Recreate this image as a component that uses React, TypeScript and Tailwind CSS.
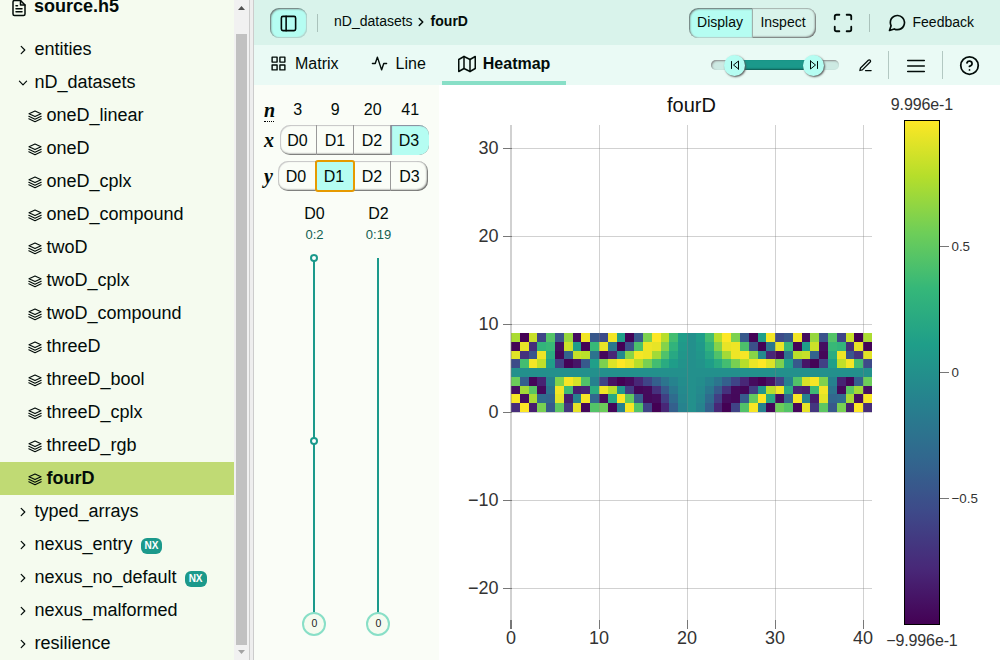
import {
  FiActivity,
  FiChevronDown,
  FiChevronRight,
  FiEdit3,
  FiFileText,
  FiGrid,
  FiHelpCircle,
  FiMap,
  FiMaximize,
  FiMenu,
  FiMessageCircle,
  FiSidebar,
  FiSkipBack,
  FiSkipForward,
} from 'react-icons/fi';
import clsx from 'clsx';

const VIRIDIS = [
  [68, 1, 84],
  [72, 40, 120],
  [62, 73, 137],
  [49, 104, 142],
  [38, 130, 142],
  [31, 158, 137],
  [53, 183, 121],
  [110, 206, 88],
  [181, 222, 43],
  [253, 231, 37],
];

const DOMAIN_MAX = 0.9996;
const COLS = 41;
const ROWS = 9;

function viridis(t: number) {
  const pos = Math.min(Math.max(t, 0), 1) * (VIRIDIS.length - 1);
  const i = Math.min(Math.floor(pos), VIRIDIS.length - 2);
  const rgb = VIRIDIS[i].map((c, k) => Math.round(c + (VIRIDIS[i + 1][k] - c) * (pos - i)));
  return `rgb(${rgb.join(',')})`;
}

interface Entity {
  name: string;
  kind: 'group' | 'dataset';
  expanded?: boolean;
  selected?: boolean;
  nexus?: boolean;
}

const ENTITIES: Entity[] = [
  { name: 'entities', kind: 'group' },
  { name: 'nD_datasets', kind: 'group', expanded: true },
  { name: 'oneD_linear', kind: 'dataset' },
  { name: 'oneD', kind: 'dataset' },
  { name: 'oneD_cplx', kind: 'dataset' },
  { name: 'oneD_compound', kind: 'dataset' },
  { name: 'twoD', kind: 'dataset' },
  { name: 'twoD_cplx', kind: 'dataset' },
  { name: 'twoD_compound', kind: 'dataset' },
  { name: 'threeD', kind: 'dataset' },
  { name: 'threeD_bool', kind: 'dataset' },
  { name: 'threeD_cplx', kind: 'dataset' },
  { name: 'threeD_rgb', kind: 'dataset' },
  { name: 'fourD', kind: 'dataset', selected: true },
  { name: 'typed_arrays', kind: 'group' },
  { name: 'nexus_entry', kind: 'group', nexus: true },
  { name: 'nexus_no_default', kind: 'group', nexus: true },
  { name: 'nexus_malformed', kind: 'group' },
  { name: 'resilience', kind: 'group' },
];

function LayersIcon({ className }: { className?: string }) {
  return (
    <svg
      className={className}
      viewBox="0 0 16 16"
      fill="none"
      stroke="currentColor"
      strokeWidth="1.1"
      strokeLinecap="round"
      strokeLinejoin="round"
    >
      <path d="M8 3 L14 5.8 L8 8.6 L2 5.8 Z" />
      <path d="M1.8 8.3 L8 11.2 L14.2 8.3" />
      <path d="M1.8 10.8 L8 13.7 L14.2 10.8" />
    </svg>
  );
}

function EntityItem({ entity }: { entity: Entity }) {
  const isGroup = entity.kind === 'group';
  const Icon = !isGroup ? LayersIcon : entity.expanded ? FiChevronDown : FiChevronRight;

  return (
    <li
      className={clsx(
        'flex h-[33px] items-center text-[18px] leading-[33px]',
        isGroup ? 'pl-[15px]' : 'pl-[27px]',
        entity.selected && 'bg-[#c0da74] font-bold',
      )}
    >
      <Icon className={clsx('mt-[1px] mr-[3.5px] h-4 w-4 shrink-0', isGroup && 'scale-90')} />
      <span>{entity.name}</span>
      {entity.nexus && (
        <span className="mt-[3px] ml-2 flex h-4 items-center rounded-md bg-[#1b998b] px-1 text-[10px] leading-none font-bold text-white">
          NX
        </span>
      )}
    </li>
  );
}

function Sidebar() {
  return (
    <aside className="flex w-[250px] shrink-0 border-r border-[#ccc]">
      <div className="flex-1 overflow-hidden bg-[#f5fbef]">
        <div className="flex h-[33px] items-start pl-[10px] text-[18px] font-bold">
          <FiFileText className="mt-[-1px] mr-[6px] h-[18px] w-[18px]" />
          <span className="-mt-[6px] leading-6">source.h5</span>
        </div>
        <ul>
          {ENTITIES.map((entity) => (
            <EntityItem key={entity.name} entity={entity} />
          ))}
        </ul>
      </div>
      <div className="flex w-[15px] flex-col items-center bg-[#f1f1f1]">
        <svg className="h-[34px] w-[15px] shrink-0" viewBox="0 0 15 34">
          <path d="M4 10 L7.5 6 L11 10 Z" fill="#505050" />
        </svg>
        <div className="w-[11px] flex-1 bg-[#c1c1c1]" />
        <svg className="h-[15px] w-[15px] shrink-0" viewBox="0 0 15 15">
          <path d="M4 5 L7.5 9 L11 5 Z" fill="#a3a3a3" />
        </svg>
      </div>
    </aside>
  );
}

function BreadcrumbsBar() {
  return (
    <header className="flex h-[45px] shrink-0 items-center bg-[#d9f3eb] text-[14px]">
      <button className="ml-4 flex h-[30px] w-[37px] items-center justify-center rounded-[9px] bg-[#b5fdf2] shadow-[inset_1px_1px_2px_#666,inset_-1px_-1px_1px_#b9d8d1]">
        <FiSidebar className="mt-0.5 h-[19px] w-[19px]" />
      </button>
      <div className="mx-[10px] h-[18px] w-px bg-[#aac2bb]" />
      <span className="ml-[6px] -mt-[3px]">nD_datasets</span>
      <FiChevronRight className="mr-[2.5px] ml-[1.5px] -mt-px h-[14px] w-[14px]" strokeWidth={2.6} />
      <span className="-mt-[3px] font-bold">fourD</span>
      <div className="ml-auto flex h-[30px] w-[127px] overflow-hidden rounded-[9px] shadow-[inset_-1px_-1px_2px_#666,inset_1px_1px_1px_#aab8b4]">
        <button className="w-[64px] rounded-l-[9px] border-r border-[#9fb0ab] bg-[#b5fdf2] shadow-[inset_1px_1px_2px_#666,inset_0_-1px_1px_#b9d8d1]">
          Display
        </button>
        <button className="flex-1 pr-[2px]">Inspect</button>
      </div>
      <FiMaximize className="ml-[16px] h-[22px] w-[22px]" />
      <div className="ml-[15px] h-[18px] w-px bg-[#aac2bb]" />
      <FiMessageCircle className="ml-[17px] h-[20px] w-[20px]" />
      <span className="mr-[26px] ml-[6px]">Feedback</span>
    </header>
  );
}

function DomainSlider() {
  return (
    <div className="flex h-[10px] w-[128px] items-center rounded-full bg-[#cdeae3] shadow-[inset_1px_1px_2px_#888]">
      <div className="z-10 ml-[13px] flex h-[21px] w-[21px] items-center justify-center rounded-full bg-[#b5fdf2] shadow-[1px_1px_2px_#555]">
        <FiSkipBack className="h-[12px] w-[12px]" />
      </div>
      <div className="-mx-1 h-[10px] flex-1 bg-[#1b998b] shadow-[inset_0_-1px_2px_#0e564e]" />
      <div className="z-10 mr-[15px] flex h-[21px] w-[21px] items-center justify-center rounded-full bg-[#b5fdf2] shadow-[1px_1px_2px_#555]">
        <FiSkipForward className="h-[12px] w-[12px]" />
      </div>
    </div>
  );
}

function Toolbar() {
  return (
    <nav className="flex h-10 shrink-0 items-center bg-[#eafaf5] text-[16px]">
      <div className="flex h-10 items-center pb-[3px] pl-[16px]">
        <FiGrid className="mr-[8px] h-[17px] w-[17px]" />
        Matrix
      </div>
      <div className="flex h-10 items-center pb-[3px] pl-[32px]">
        <FiActivity className="mr-[8px] h-[17px] w-[17px]" />
        Line
      </div>
      <div className="ml-[16px] flex h-10 w-[124px] items-center border-b-4 border-[#88dfc7] pt-[2px] pl-[16px] font-bold">
        <FiMap className="mr-[7px] h-[18px] w-[18px]" />
        Heatmap
      </div>
      <div className="ml-auto flex items-center">
        <DomainSlider />
        <FiEdit3 className="ml-[19px] h-[15px] w-[15px]" />
        <div className="ml-[15px] h-7 w-px bg-[#b3c8c2]" />
        <FiMenu className="mt-px ml-[15.5px] h-[22px] w-[22px]" strokeWidth={1.8} />
        <div className="ml-[15.5px] h-7 w-px bg-[#b3c8c2]" />
        <FiHelpCircle className="mr-[20px] ml-[16px] mt-px h-[21px] w-[21px]" />
      </div>
    </nav>
  );
}

const DIMS = ['D0', 'D1', 'D2', 'D3'];

function DimsRow({ axis, active }: { axis: 'x' | 'y'; active: number }) {
  return (
    <div className="flex h-9 items-center">
      <span
        className={clsx(
          "w-[10px] shrink-0 font-['Liberation_Serif',serif] text-[20px] leading-none font-bold italic",
          axis === 'x' ? 'mr-[6px]' : 'mr-[4px]',
        )}
      >
        {axis}
      </span>
      <div
        className={clsx(
          'flex h-[30px] shrink-0 rounded-[10px] shadow-[inset_-1px_-1px_2px_#555,inset_1px_1px_1px_#ccc]',
          axis === 'x' ? 'w-[149px]' : 'w-[150px]',
        )}
      >
        {DIMS.map((dim, i) => (
          <button
            key={dim}
            className={clsx(
              'h-[30px] shrink-0 border-[#999] pt-px',
              axis === 'y' && i < 2 ? 'w-[38px]' : 'w-[37px]',
              i === 0 && 'pr-[1px]',
              i < 3 && 'border-r',
              i === active && 'bg-[#b5fdf2]',
              i === active && axis === 'x' && 'w-[38px] rounded-r-[10px] pr-[2px] shadow-[inset_1px_1px_1px_#889]',
              i === active &&
                axis === 'y' &&
                'z-10 rounded-[2px] border-r-0 pr-[2px] outline-2 -outline-offset-1 outline-[#e69a00]',
            )}
          >
            {dim}
          </button>
        ))}
      </div>
    </div>
  );
}

function DimSlider({ dim, range, marks }: { dim: string; range: string; marks?: boolean }) {
  return (
    <div className="flex w-16 flex-col items-center">
      <span className="pl-px leading-6">{dim}</span>
      <span className="mt-[-1px] pl-px text-[13px] leading-5 text-[#135e50]">{range}</span>
      <svg className="mt-[6px]" width="26" height="385" viewBox="0 0 26 385">
        <path d="M13 7V362" stroke="#1b998b" strokeWidth="2" />
        {marks && (
          <g fill="#fff" stroke="#1b998b" strokeWidth="2">
            <circle cx="13" cy="7" r="3" />
            <circle cx="13" cy="190" r="3" />
          </g>
        )}
        <circle cx="13" cy="373" r="11" fill="#f5fbef" stroke="#88dfc7" strokeWidth="2" />
        <text x="13.3" y="376" textAnchor="middle" fontSize="10.5" fill="#222">
          0
        </text>
      </svg>
    </div>
  );
}

function DimensionMapper() {
  return (
    <div className="w-[185px] shrink-0 bg-[#fafdf7] pl-[10px] text-[16px]">
      <div className="flex h-[37px] items-end">
        <span className="w-[10px] border-b border-dotted border-black font-['Liberation_Serif',serif] text-[20px] leading-[21px] font-bold italic">
          n
        </span>
        <div className="ml-[5px] flex w-[150px] text-center">
          {[3, 9, 20, 41].map((n) => (
            <span key={n} className="flex-1">
              {n}
            </span>
          ))}
        </div>
      </div>
      <DimsRow axis="x" active={3} />
      <DimsRow axis="y" active={1} />
      <div className="mt-[8px] ml-[18px] flex">
        <DimSlider dim="D0" range="0:2" marks />
        <DimSlider dim="D2" range="0:19" />
      </div>
    </div>
  );
}

function Heatmap() {
  const cellW = 361 / COLS;
  const cellH = 79 / ROWS;
  const cells = [];
  for (let row = 0; row < ROWS; row++) {
    for (let col = 0; col < COLS; col++) {
      const value = Math.sin(0.025 * (row - 4) * (col - 20) ** 2);
      const left = Math.round(col * cellW);
      const top = Math.round((ROWS - 1 - row) * cellH);
      cells.push(
        <rect
          key={`${row}-${col}`}
          x={72 + left}
          y={248 + top}
          width={Math.round((col + 1) * cellW) - left}
          height={Math.round((ROWS - row) * cellH) - top}
          fill={viridis((value / DOMAIN_MAX + 1) / 2)}
        />,
      );
    }
  }

  return (
    <svg width="561" height="575" viewBox="0 0 561 575" className="bg-white" fill="#333">
      <defs>
        <linearGradient id="viridis" x1="0" y1="1" x2="0" y2="0">
          {VIRIDIS.map((_, i) => (
            <stop key={i} offset={i / 9} stopColor={viridis(i / 9)} />
          ))}
        </linearGradient>
      </defs>

      <text x="252.5" y="27" textAnchor="middle" fontSize="20" fill="#111">
        fourD
      </text>
      <g shapeRendering="crispEdges">{cells}</g>

      <g fontSize="18">
        {[30, 20, 10, 0, -10, -20].map((tick, i) => {
          const y = 63.5 + i * 88;
          return (
            <g key={tick}>
              <path d={`M72 ${y}H433`} stroke="#808080" strokeOpacity="0.36" />
              <path d={`M64 ${y}H73`} stroke="#777" />
              <text x="59.5" y={y + 5.5} textAnchor="end">
                {String(tick).replace('-', '−')}
              </text>
            </g>
          );
        })}
        {[0, 10, 20, 30, 40].map((tick, i) => {
          const x = i === 0 ? 72 : 72.5 + i * 88;
          const strokeWidth = i === 0 ? 2 : 1;
          return (
            <g key={tick} strokeWidth={strokeWidth}>
              <path d={`M${x} 40V540`} stroke="#808080" strokeOpacity="0.36" />
              <path d={`M${x} 535V544`} stroke="#777" />
              <text x={72 + i * 88} y="559" textAnchor="middle">
                {tick}
              </text>
            </g>
          );
        })}
      </g>

      <rect x="465.5" y="35.5" width="35" height="504" fill="url(#viridis)" stroke="#000" />
      <g fontSize="16">
        <text x="483" y="25" textAnchor="middle" textLength="62.5">
          9.996e-1
        </text>
        <text x="483" y="561" textAnchor="middle" textLength="71.5">
          −9.996e-1
        </text>
      </g>
      <g fontSize="13.33">
        {['0.5', '0', '−0.5'].map((label, i) => (
          <g key={label}>
            <path d={`M501 ${161.5 + i * 126}h9`} stroke="#777" />
            <text x="512.5" y={166 + i * 126}>
              {label}
            </text>
          </g>
        ))}
      </g>
    </svg>
  );
}

export default function App() {
  return (
    <div className="flex h-[660px] w-[1000px] overflow-hidden bg-white font-['Liberation_Sans',sans-serif] text-[#020c09]">
      <Sidebar />
      <div className="w-1 shrink-0 border-r border-[#ccc] bg-[#eee]" />
      <main className="flex min-w-0 flex-1 flex-col">
        <BreadcrumbsBar />
        <Toolbar />
        <div className="flex flex-1">
          <DimensionMapper />
          <Heatmap />
        </div>
      </main>
    </div>
  );
}
